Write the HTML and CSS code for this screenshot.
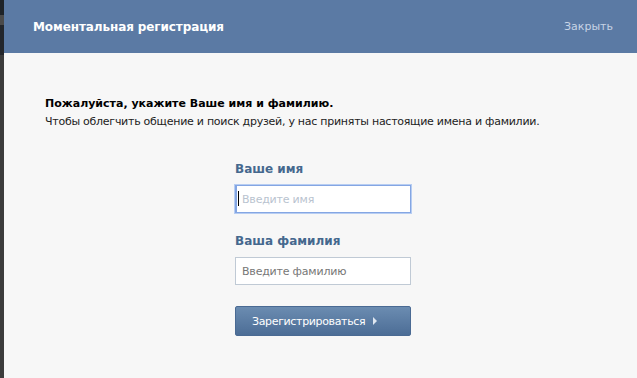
FILE: index.html
```html
<!DOCTYPE html>
<html lang="ru">
<head>
    <meta charset="UTF-8">
    <title>Моментальная регистрация</title>
    <link rel="stylesheet" href="styles.css">
</head>
<body>
    <div class="page">
        <div class="side"></div>
        <div class="dialog">
            <header class="dialog-head">
                <h1>Моментальная регистрация</h1>
                <a href="#" class="close">Закрыть</a>
            </header>

            <section class="dialog-body">
                <p class="lead">Пожалуйста, укажите Ваше имя и фамилию.</p>
                <p class="note">Чтобы облегчить общение и поиск друзей, у нас приняты настоящие имена и фамилии.</p>

                <form class="reg-form">
                    <label class="field-label" for="fname">Ваше имя</label>
                    <div class="field-wrap">
                        <input class="field focus" id="fname" type="text" placeholder="Введите имя">
                        <span class="caret"></span>
                    </div>

                    <label class="field-label" for="lname">Ваша фамилия</label>
                    <input class="field" id="lname" type="text" placeholder="Введите фамилию">

                    <button type="button" class="btn">Зарегистрироваться <span class="arrow"></span></button>
                </form>
            </section>
        </div>
    </div>
</body>
</html>
```

FILE: styles.css
```css
body {
    margin: 0;
    padding: 0;
    font-family: 'DejaVu Sans', Verdana, sans-serif;
    font-size: 11px;
    background-color: #f7f7f7;
    color: #000;
}

.page {
    display: flex;
    height: 378px;
    overflow: hidden;
}

.side {
    width: 4px;
    flex: none;
    background: linear-gradient(#1e2328 0, #1e2328 15px, #4a4a4a 15px, #4a4a4a 25px, #23262b 25px, #23262b 55px, #3c3c3c 55px);
}

.dialog {
    flex: 1;
    background-color: #f7f7f7;
}

.dialog-head {
    height: 53px;
    background-color: #5b7aa4;
    display: flex;
    align-items: center;
    justify-content: space-between;
    padding: 0 24px 0 29px;
}

.dialog-head h1 {
    margin: 0;
    font-size: 12px;
    font-weight: bold;
    color: #ffffff;
    letter-spacing: -0.1px;
}

.close {
    color: #c7d4e6;
    text-decoration: none;
    font-size: 11px;
}

.dialog-body {
    padding: 42px 41px 0;
}

.lead {
    margin: 0;
    font-weight: bold;
    line-height: 18px;
}

.note {
    margin: 0;
    line-height: 18px;
    color: #222;
    letter-spacing: -0.26px;
}

.reg-form {
    width: 176px;
    margin: 30px 0 0 190px;
    display: flex;
    flex-direction: column;
}

.field-label {
    font-weight: bold;
    color: #45688e;
    font-size: 12px;
    line-height: 16px;
    margin-bottom: 8px;
}

.field-wrap {
    position: relative;
    display: flex;
    flex-direction: column;
}

.caret {
    position: absolute;
    left: 3px;
    top: 6px;
    width: 1px;
    height: 15px;
    background: #000;
}

.field {
    box-sizing: border-box;
    height: 28px;
    border: 1px solid #c0cad5;
    background: #fff;
    padding: 0 6px;
    font-family: inherit;
    font-size: 11px;
    margin-bottom: 20px;
    outline: none;
    letter-spacing: -0.2px;
}

.field::placeholder {
    color: #777;
}

.field.focus {
    border-color: #84a6e3;
    box-shadow: 0 0 0 1px #b7cdf2;
    padding-left: 5px;
    border-left: 2px solid #84a6e3;
}

.field.focus::placeholder {
    color: #b9c3cf;
}

.btn {
    box-sizing: border-box;
    margin-top: 1px;
    height: 30px;
    border: 1px solid #4a6a93;
    border-radius: 2px;
    background: linear-gradient(#6b8cb1, #4c6d96);
    color: #ffffff;
    font-family: inherit;
    font-size: 11px;
    letter-spacing: -0.35px;
    display: flex;
    align-items: center;
    justify-content: flex-start;
    gap: 8px;
    padding: 0 0 0 16px;
    cursor: pointer;
}

.arrow {
    width: 0;
    height: 0;
    border-top: 4px solid transparent;
    border-bottom: 4px solid transparent;
    border-left: 4px solid #dfe7f1;
}
```
